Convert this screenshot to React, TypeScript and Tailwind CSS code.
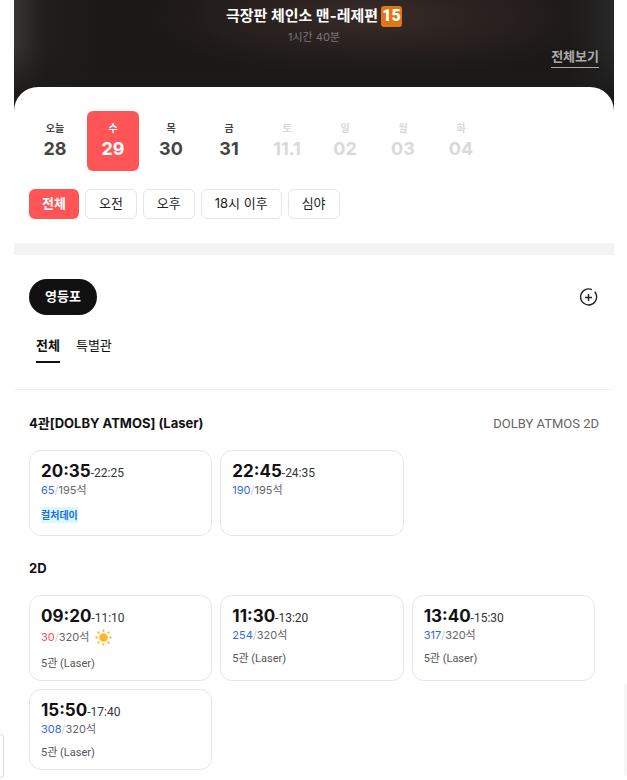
import React, { useState } from "react"
import clsx from "clsx"

type Showtime = {
  start: string
  end: string
  left: number
  total: number
  hall?: string
  event?: string
  morning?: boolean
}

const DATES = [
  { day: "오늘", date: "28" },
  { day: "수", date: "29" },
  { day: "목", date: "30" },
  { day: "금", date: "31" },
  { day: "토", date: "11.1", disabled: true },
  { day: "일", date: "02", disabled: true },
  { day: "월", date: "03", disabled: true },
  { day: "화", date: "04", disabled: true },
]

const TIME_FILTERS = ["전체", "오전", "오후", "18시 이후", "심야"]

const HALL_TABS = ["전체", "특별관"]

const HALLS: { name: string; format?: string; showtimes: Showtime[] }[] = [
  {
    name: "4관[DOLBY ATMOS] (Laser)",
    format: "DOLBY ATMOS 2D",
    showtimes: [
      { start: "20:35", end: "22:25", left: 65, total: 195, event: "컬처데이" },
      { start: "22:45", end: "24:35", left: 190, total: 195 },
    ],
  },
  {
    name: "2D",
    showtimes: [
      {
        start: "09:20",
        end: "11:10",
        left: 30,
        total: 320,
        hall: "5관 (Laser)",
        morning: true,
      },
      { start: "11:30", end: "13:20", left: 254, total: 320, hall: "5관 (Laser)" },
      { start: "13:40", end: "15:30", left: 317, total: 320, hall: "5관 (Laser)" },
      { start: "15:50", end: "17:40", left: 308, total: 320, hall: "5관 (Laser)" },
    ],
  },
]

const SunIcon = () => (
  <svg width="17" height="17" viewBox="0 0 17 17" aria-label="조조" role="img">
    <circle cx="8.5" cy="8.5" r="4.3" fill="#fdb52b" />
    <g stroke="#fdb52b" strokeWidth="1.8" strokeLinecap="round">
      <path d="M8.5 1.2v.8M8.5 15v.8M1.2 8.5h.8M15 8.5h.8M3.2 3.2l.6.6M13.2 13.2l.6.6M3.2 13.8l.6-.6M13.2 3.8l.6-.6" />
    </g>
  </svg>
)

const AddTheaterIcon = () => (
  <svg
    width="20"
    height="20"
    viewBox="0 0 20 20"
    fill="none"
    stroke="#222"
    strokeWidth="1.4"
  >
    <path d="M12.9 2.6A8 8 0 1 0 15.7 4.7" />
    <path d="M9.5 7v7M6 10.5h7" />
  </svg>
)

const ShowtimeCard = ({ showtime }: { showtime: Showtime }) => {
  const { start, end, left, total, hall, event, morning } = showtime

  return (
    <button
      type="button"
      className="flex flex-col items-start justify-start rounded-xl border border-[#e6e6e6] bg-white px-[11px] pt-[10px] pb-2 text-left"
    >
      <span className="flex h-5 items-baseline whitespace-nowrap">
        <strong className="text-[17px] leading-5 font-bold text-[#111]">
          {start}
        </strong>
        <span className="font-['Roboto',sans-serif] text-xs leading-5 text-[#333]">
          -{end}
        </span>
      </span>
      <span
        className={clsx(
          "flex items-center text-[11px]",
          morning ? "h-[23px]" : "h-[18px]"
        )}
      >
        <span className={left <= 30 ? "text-[#ff5053]" : "text-[#3268e8]"}>
          {left}
        </span>
        <span className="text-[#ccc]">/</span>
        <span className="mr-1.5 text-[#666]">{total}석</span>
        {morning && <SunIcon />}
      </span>
      {hall && (
        <span className="mt-[7px] font-['Roboto','Noto_Sans_CJK_KR',sans-serif] text-[11px] leading-4 text-[#555]">
          {hall}
        </span>
      )}
      {event && (
        <span className="mt-2 mb-1 bg-[#d9fafd] text-[10px] leading-4 font-bold text-[#1f6ce0]">
          {event}
        </span>
      )}
    </button>
  )
}

const App = () => {
  const [selectedDate, setSelectedDate] = useState("29")
  const [timeFilter, setTimeFilter] = useState("전체")
  const [hallTab, setHallTab] = useState("전체")

  return (
    <div className="relative min-h-screen overflow-hidden bg-white pr-[13px] pl-[14px] font-['Inter','Noto_Sans_CJK_KR',sans-serif] text-[#111]">
      <header className="bg-[#1b1816] bg-[linear-gradient(0deg,#1c1b1a_15%,transparent_60%),linear-gradient(90deg,#353535_0%,#25222199_5%,transparent_14%,transparent_92%,#262829_100%),radial-gradient(ellipse_at_60%_15%,#382b28_0%,transparent_45%)]">
        <div className="flex flex-col items-center pt-1">
          <h1 className="flex h-6 items-center gap-[3px] text-[15px] font-bold text-white">
            극장판 체인소 맨-레제편
            <span className="flex size-[21px] items-center justify-center rounded-[3px] bg-[#df7516] font-['Roboto',sans-serif] text-base leading-none font-black">
              15
            </span>
          </h1>
          <p className="text-[11px] leading-[18px] text-[#777]">1시간 40분</p>
        </div>
        <div className="flex justify-end px-[15px] pb-[19px]">
          <a
            href="#all"
            className="border-b border-[#aaa] text-[13px] leading-[21px] font-bold text-[#aaa]"
          >
            전체보기
          </a>
        </div>
        <div className="h-6 rounded-t-3xl bg-white" />
      </header>

      <section className="px-[15px] pb-6">
        <div className="flex gap-1.5">
          {DATES.map((d) => (
            <button
              key={d.date}
              type="button"
              disabled={d.disabled}
              onClick={() => setSelectedDate(d.date)}
              className={clsx(
                "flex h-[60px] w-[52px] flex-col items-center rounded-md pt-2",
                d.disabled && "text-[#d9d9d9]",
                !d.disabled &&
                  (selectedDate === d.date
                    ? "bg-[#ff5557] text-white"
                    : "text-[#444]")
              )}
            >
              <span className="text-[10px] leading-[18px] font-bold">
                {d.day}
              </span>
              <span className="text-lg leading-6 font-bold">{d.date}</span>
            </button>
          ))}
        </div>

        <div className="mt-[18px] flex gap-1.5">
          {TIME_FILTERS.map((label) => (
            <button
              key={label}
              type="button"
              onClick={() => setTimeFilter(label)}
              className={clsx(
                "h-[30px] rounded-md text-[13px]",
                timeFilter === label
                  ? "bg-[#ff5557] px-[13px] font-bold text-white"
                  : "border border-[#e6e6e6] bg-white px-[13px] text-[#222]"
              )}
            >
              {label}
            </button>
          ))}
        </div>
      </section>

      <div className="h-3 bg-[#f3f3f3]" />

      <section className="border-b border-[#f0f0f0] px-[15px] pt-6 pb-[26px]">
        <div className="flex items-center justify-between">
          <button
            type="button"
            className="h-9 rounded-full bg-[#111] px-4 text-[13px] font-bold text-white"
          >
            영등포
          </button>
          <button type="button" aria-label="극장 추가">
            <AddTheaterIcon />
          </button>
        </div>
        <div className="mt-[15px] flex gap-4 px-[7px]">
          {HALL_TABS.map((label) => (
            <button
              key={label}
              type="button"
              onClick={() => setHallTab(label)}
              className={clsx(
                "h-[33px] border-b-2 text-[13px]",
                hallTab === label
                  ? "border-[#111] font-bold"
                  : "border-transparent"
              )}
            >
              {label}
            </button>
          ))}
        </div>
      </section>

      <div className="pt-px pb-2">
        {HALLS.map((hall) => (
          <section key={hall.name} className="px-[15px] pt-[21px]">
            <div className="flex h-6 items-center justify-between">
              <h2 className="text-[13px] font-bold">{hall.name}</h2>
              {hall.format && (
                <span className="font-['Roboto',sans-serif] text-[13px] text-[#666]">
                  {hall.format}
                </span>
              )}
            </div>
            <div className="mt-[14px] mr-1 grid grid-cols-3 gap-2">
              {hall.showtimes.map((s) => (
                <ShowtimeCard key={s.start} showtime={s} />
              ))}
            </div>
          </section>
        ))}
      </div>

      {/* edges of the floating side panels */}
      <div className="absolute bottom-0.5 left-0 h-11 w-1 rounded-r-md border border-l-0 border-[#ddd]" />
      <div className="absolute right-0 bottom-1 h-[92px] w-[3px] rounded-l-sm bg-[#f7f7f7]" />
    </div>
  )
}

export default App
